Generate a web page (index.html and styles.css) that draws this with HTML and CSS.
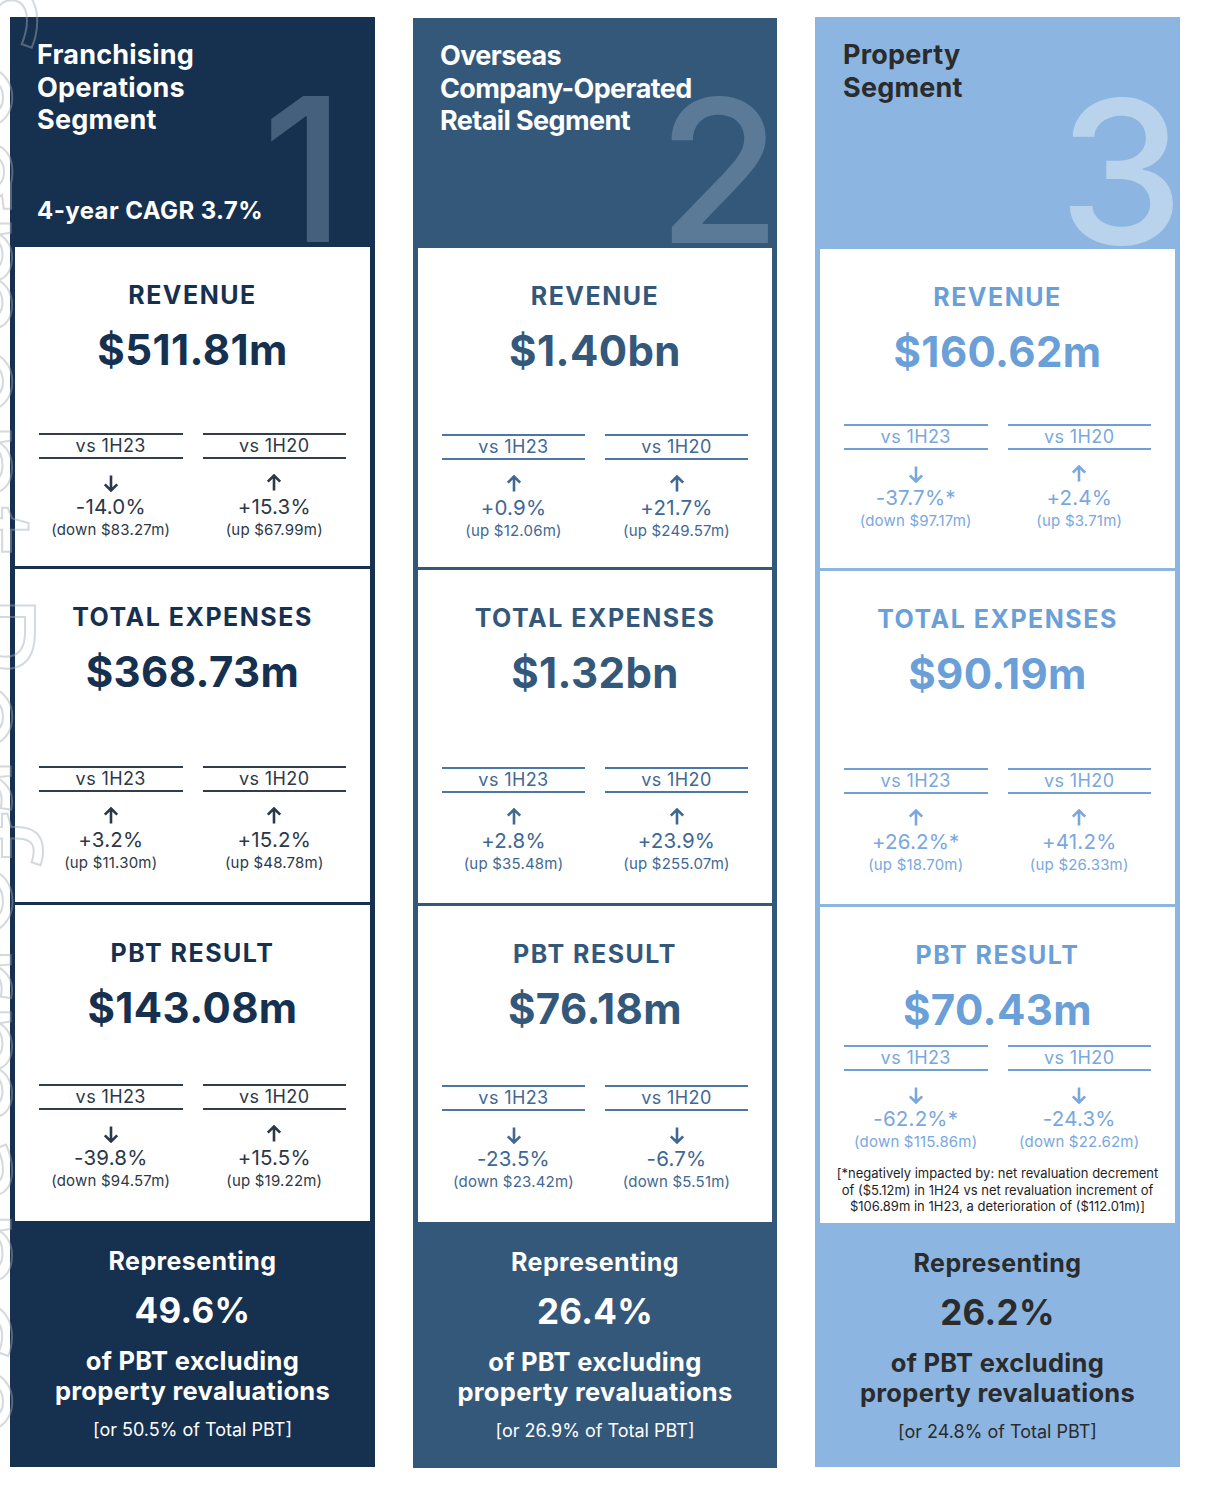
FILE: index.html
```html
<!DOCTYPE html>
<html lang="en">
<head>
<meta charset="utf-8">
<title>Segment Results</title>
<link rel="stylesheet" href="styles.css">
</head>
<body>
<main class="board">
  <div class="deco" aria-hidden="true">Segment Performance</div>

  <section class="seg seg--one">
    <header class="seg-head">
      <h2 class="seg-title">Franchising<br>Operations<br>Segment</h2>
      <p class="seg-cagr">4-year CAGR 3.7%</p>
      <span class="seg-num">1</span>
    </header>
    <div class="panel panel--a">
      <h3 class="panel-title">REVENUE</h3>
      <p class="panel-value">$511.81m</p>
      <div class="stats">
        <div class="stat">
          <div class="stat-label">vs 1H23</div>
          <svg class="arrow" viewBox="0 0 16 18"><path d="M8 1.5v15M1.8 10.3l6.2 6.2 6.2-6.2"/></svg>
          <div class="stat-pct">-14.0%</div>
          <div class="stat-sub">(down $83.27m)</div>
        </div>
        <div class="stat">
          <div class="stat-label">vs 1H20</div>
          <svg class="arrow" viewBox="0 0 16 18"><path d="M8 16.5v-15M1.8 7.7l6.2-6.2 6.2 6.2"/></svg>
          <div class="stat-pct">+15.3%</div>
          <div class="stat-sub">(up $67.99m)</div>
        </div>
      </div>
    </div>
    <div class="panel panel--b">
      <h3 class="panel-title">TOTAL EXPENSES</h3>
      <p class="panel-value">$368.73m</p>
      <div class="stats">
        <div class="stat">
          <div class="stat-label">vs 1H23</div>
          <svg class="arrow" viewBox="0 0 16 18"><path d="M8 16.5v-15M1.8 7.7l6.2-6.2 6.2 6.2"/></svg>
          <div class="stat-pct">+3.2%</div>
          <div class="stat-sub">(up $11.30m)</div>
        </div>
        <div class="stat">
          <div class="stat-label">vs 1H20</div>
          <svg class="arrow" viewBox="0 0 16 18"><path d="M8 16.5v-15M1.8 7.7l6.2-6.2 6.2 6.2"/></svg>
          <div class="stat-pct">+15.2%</div>
          <div class="stat-sub">(up $48.78m)</div>
        </div>
      </div>
    </div>
    <div class="panel panel--c">
      <h3 class="panel-title">PBT RESULT</h3>
      <p class="panel-value">$143.08m</p>
      <div class="stats">
        <div class="stat">
          <div class="stat-label">vs 1H23</div>
          <svg class="arrow" viewBox="0 0 16 18"><path d="M8 1.5v15M1.8 10.3l6.2 6.2 6.2-6.2"/></svg>
          <div class="stat-pct">-39.8%</div>
          <div class="stat-sub">(down $94.57m)</div>
        </div>
        <div class="stat">
          <div class="stat-label">vs 1H20</div>
          <svg class="arrow" viewBox="0 0 16 18"><path d="M8 16.5v-15M1.8 7.7l6.2-6.2 6.2 6.2"/></svg>
          <div class="stat-pct">+15.5%</div>
          <div class="stat-sub">(up $19.22m)</div>
        </div>
      </div>
    </div>
    <footer class="seg-foot">
      <p class="foot-lead">Representing</p>
      <p class="foot-pct">49.6%</p>
      <p class="foot-desc">of PBT excluding<br>property revaluations</p>
      <p class="foot-note">[or 50.5% of Total PBT]</p>
    </footer>
  </section>

  <section class="seg seg--two">
    <header class="seg-head">
      <h2 class="seg-title">Overseas<br>Company-Operated<br>Retail Segment</h2>
      <span class="seg-num">2</span>
    </header>
    <div class="panel panel--a">
      <h3 class="panel-title">REVENUE</h3>
      <p class="panel-value">$1.40bn</p>
      <div class="stats">
        <div class="stat">
          <div class="stat-label">vs 1H23</div>
          <svg class="arrow" viewBox="0 0 16 18"><path d="M8 16.5v-15M1.8 7.7l6.2-6.2 6.2 6.2"/></svg>
          <div class="stat-pct">+0.9%</div>
          <div class="stat-sub">(up $12.06m)</div>
        </div>
        <div class="stat">
          <div class="stat-label">vs 1H20</div>
          <svg class="arrow" viewBox="0 0 16 18"><path d="M8 16.5v-15M1.8 7.7l6.2-6.2 6.2 6.2"/></svg>
          <div class="stat-pct">+21.7%</div>
          <div class="stat-sub">(up $249.57m)</div>
        </div>
      </div>
    </div>
    <div class="panel panel--b">
      <h3 class="panel-title">TOTAL EXPENSES</h3>
      <p class="panel-value">$1.32bn</p>
      <div class="stats">
        <div class="stat">
          <div class="stat-label">vs 1H23</div>
          <svg class="arrow" viewBox="0 0 16 18"><path d="M8 16.5v-15M1.8 7.7l6.2-6.2 6.2 6.2"/></svg>
          <div class="stat-pct">+2.8%</div>
          <div class="stat-sub">(up $35.48m)</div>
        </div>
        <div class="stat">
          <div class="stat-label">vs 1H20</div>
          <svg class="arrow" viewBox="0 0 16 18"><path d="M8 16.5v-15M1.8 7.7l6.2-6.2 6.2 6.2"/></svg>
          <div class="stat-pct">+23.9%</div>
          <div class="stat-sub">(up $255.07m)</div>
        </div>
      </div>
    </div>
    <div class="panel panel--c">
      <h3 class="panel-title">PBT RESULT</h3>
      <p class="panel-value">$76.18m</p>
      <div class="stats">
        <div class="stat">
          <div class="stat-label">vs 1H23</div>
          <svg class="arrow" viewBox="0 0 16 18"><path d="M8 1.5v15M1.8 10.3l6.2 6.2 6.2-6.2"/></svg>
          <div class="stat-pct">-23.5%</div>
          <div class="stat-sub">(down $23.42m)</div>
        </div>
        <div class="stat">
          <div class="stat-label">vs 1H20</div>
          <svg class="arrow" viewBox="0 0 16 18"><path d="M8 1.5v15M1.8 10.3l6.2 6.2 6.2-6.2"/></svg>
          <div class="stat-pct">-6.7%</div>
          <div class="stat-sub">(down $5.51m)</div>
        </div>
      </div>
    </div>
    <footer class="seg-foot">
      <p class="foot-lead">Representing</p>
      <p class="foot-pct">26.4%</p>
      <p class="foot-desc">of PBT excluding<br>property revaluations</p>
      <p class="foot-note">[or 26.9% of Total PBT]</p>
    </footer>
  </section>

  <section class="seg seg--three">
    <header class="seg-head">
      <h2 class="seg-title">Property<br>Segment</h2>
      <span class="seg-num">3</span>
    </header>
    <div class="panel panel--a panel--high">
      <h3 class="panel-title">REVENUE</h3>
      <p class="panel-value">$160.62m</p>
      <div class="stats">
        <div class="stat">
          <div class="stat-label">vs 1H23</div>
          <svg class="arrow" viewBox="0 0 16 18"><path d="M8 1.5v15M1.8 10.3l6.2 6.2 6.2-6.2"/></svg>
          <div class="stat-pct">-37.7%*</div>
          <div class="stat-sub">(down $97.17m)</div>
        </div>
        <div class="stat">
          <div class="stat-label">vs 1H20</div>
          <svg class="arrow" viewBox="0 0 16 18"><path d="M8 16.5v-15M1.8 7.7l6.2-6.2 6.2 6.2"/></svg>
          <div class="stat-pct">+2.4%</div>
          <div class="stat-sub">(up $3.71m)</div>
        </div>
      </div>
    </div>
    <div class="panel panel--b">
      <h3 class="panel-title">TOTAL EXPENSES</h3>
      <p class="panel-value">$90.19m</p>
      <div class="stats">
        <div class="stat">
          <div class="stat-label">vs 1H23</div>
          <svg class="arrow" viewBox="0 0 16 18"><path d="M8 16.5v-15M1.8 7.7l6.2-6.2 6.2 6.2"/></svg>
          <div class="stat-pct">+26.2%*</div>
          <div class="stat-sub">(up $18.70m)</div>
        </div>
        <div class="stat">
          <div class="stat-label">vs 1H20</div>
          <svg class="arrow" viewBox="0 0 16 18"><path d="M8 16.5v-15M1.8 7.7l6.2-6.2 6.2 6.2"/></svg>
          <div class="stat-pct">+41.2%</div>
          <div class="stat-sub">(up $26.33m)</div>
        </div>
      </div>
    </div>
    <div class="panel panel--c panel--note">
      <h3 class="panel-title">PBT RESULT</h3>
      <p class="panel-value">$70.43m</p>
      <div class="stats">
        <div class="stat">
          <div class="stat-label">vs 1H23</div>
          <svg class="arrow" viewBox="0 0 16 18"><path d="M8 1.5v15M1.8 10.3l6.2 6.2 6.2-6.2"/></svg>
          <div class="stat-pct">-62.2%*</div>
          <div class="stat-sub">(down $115.86m)</div>
        </div>
        <div class="stat">
          <div class="stat-label">vs 1H20</div>
          <svg class="arrow" viewBox="0 0 16 18"><path d="M8 1.5v15M1.8 10.3l6.2 6.2 6.2-6.2"/></svg>
          <div class="stat-pct">-24.3%</div>
          <div class="stat-sub">(down $22.62m)</div>
        </div>
      </div>
      <p class="panel-footnote">[*negatively impacted by: net revaluation decrement<br>of ($5.12m) in 1H24 vs net revaluation increment of<br>$106.89m in 1H23, a deterioration of ($112.01m)]</p>
    </div>
    <footer class="seg-foot">
      <p class="foot-lead">Representing</p>
      <p class="foot-pct">26.2%</p>
      <p class="foot-desc">of PBT excluding<br>property revaluations</p>
      <p class="foot-note">[or 24.8% of Total PBT]</p>
    </footer>
  </section>
</main>
</body>
</html>
```

FILE: styles.css
```css
* { box-sizing: border-box; }

html, body {
  margin: 0;
  padding: 0;
  background: #ffffff;
}

body {
  font-family: "Inter", "Liberation Sans", sans-serif;
}

.board {
  position: relative;
  display: flex;
  align-items: flex-start;
  gap: 38px;
  padding: 17px 0 0 10px;
  overflow: hidden;
  height: 1495px;
}

.deco {
  position: absolute;
  left: -80px;
  top: -20px;
  writing-mode: vertical-rl;
  font: 400 140px/1 "Open Sans", sans-serif;
  color: transparent;
  -webkit-text-stroke: 2px rgba(160, 170, 182, 0.45);
  white-space: nowrap;
  pointer-events: none;
  z-index: 3;
}

/* column */
.seg {
  width: 365px;
  height: 1450px;
  display: flex;
  flex-direction: column;
  background: var(--bg);
}

.seg--one {
  --bg: #16304f;
  --num: #45607c;
  --head-ink: #ffffff;
  --ink: #16304f;
  --line: #323d4c;
  --stat: #2c3848;
}

.seg--two {
  --bg: #34587a;
  --num: #5a7a97;
  --head-ink: #ffffff;
  --ink: #34587a;
  --line: #4a77a5;
  --stat: #3f6892;
  width: 364px;
  margin-top: 1px;
}

.seg--three {
  --bg: #8cb5e1;
  --num: #bad3ec;
  --head-ink: #2b2b2b;
  --ink: #6a9fd8;
  --line: #6f9fd5;
  --stat: #79a8de;
}

/* header */
.seg-head {
  position: relative;
  height: 230px;
  flex: none;
  overflow: hidden;
  display: flex;
  flex-direction: column;
  padding: 22px 27px 22px;
  color: var(--head-ink);
}

.seg--three .seg-head {
  height: 232px;
  padding-left: 28px;
}

.seg-title {
  position: relative;
  z-index: 1;
  margin: 0;
  font: 700 27px/32.5px "Inter", sans-serif;
  letter-spacing: 0.2px;
}

.seg--two .seg-title { letter-spacing: -0.6px; }

.seg-cagr {
  position: relative;
  z-index: 1;
  margin: auto 0 0;
  font: 700 24px/28px "Inter", sans-serif;
  letter-spacing: 0.4px;
}

.seg-num {
  position: absolute;
  right: 30px;
  bottom: -22px;
  font: 500 200px/200px "Inter", sans-serif;
  color: var(--num);
}

.seg--two .seg-num { right: -4px; }
.seg--three .seg-num { right: -4px; }

/* white panels */
.panel {
  flex: none;
  margin: 0 5px;
  background: #ffffff;
  display: flex;
  flex-direction: column;
  align-items: center;
  text-align: center;
}

.panel--a { height: 319px; padding-bottom: 27px; }
.panel--b { height: 333px; margin-top: 3px; padding-bottom: 30px; }
.panel--c { height: 316px; margin-top: 3px; padding-bottom: 31px; }
.panel--high { padding-bottom: 38px; }

.panel-title {
  margin: 33px 0 0;
  font: 700 25px/30px "Inter", sans-serif;
  letter-spacing: 1.5px;
  color: var(--ink);
}

.panel-value {
  margin: 15px 0 0;
  font: 700 42px/50px "Inter", sans-serif;
  letter-spacing: 0.4px;
  color: var(--ink);
}

.stats {
  margin-top: auto;
  width: 100%;
  display: grid;
  grid-template-columns: 1fr 1fr;
  column-gap: 20px;
  padding: 0 24px;
  color: var(--stat);
}

.panel--note { padding-bottom: 8px; }
.panel--note .stats { margin-top: 10px; }

.stat {
  display: flex;
  flex-direction: column;
  align-items: center;
}

.stat-label {
  width: 100%;
  border-top: 2px solid var(--line);
  border-bottom: 2px solid var(--line);
  font: 400 18px/22px "Inter", sans-serif;
  letter-spacing: 0.4px;
}

.arrow {
  display: block;
  width: 16px;
  height: 18px;
  margin-top: 15px;
  fill: none;
  stroke: var(--stat);
  stroke-width: 2.6;
  stroke-linecap: butt;
  stroke-linejoin: miter;
}

.stat-pct {
  margin-top: 3px;
  font: 400 20.5px/24px "Inter", sans-serif;
  letter-spacing: 0.2px;
}

.stat-sub {
  margin-top: 2px;
  font: 400 15px/18px "Inter", sans-serif;
  letter-spacing: 0.2px;
}

.panel-footnote {
  margin: 14px 0 0;
  font: 400 13px/16.5px "Inter", sans-serif;
  color: #1e1e1e;
}

/* footer */
.seg-foot {
  flex: 1;
  display: flex;
  flex-direction: column;
  align-items: center;
  text-align: center;
  padding-top: 25px;
  color: var(--head-ink);
}

.seg-foot p { margin: 0; }

.foot-lead {
  font: 700 25px/30px "Inter", sans-serif;
  letter-spacing: 0.4px;
}

.foot-pct {
  margin-top: 12px !important;
  font: 700 35px/44px "Inter", sans-serif;
  letter-spacing: 0.3px;
}

.foot-desc {
  margin-top: 14px !important;
  font: 700 25.5px/30px "Inter", sans-serif;
  letter-spacing: 0.3px;
}

.foot-note {
  margin-top: 13px !important;
  font: 400 18px/22px "Inter", sans-serif;
}
```
